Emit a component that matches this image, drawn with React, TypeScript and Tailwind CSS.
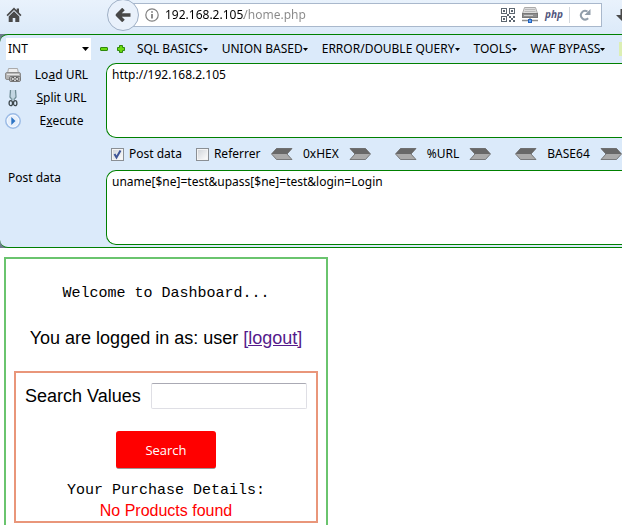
import React from "react";

const uiFont = "font-['Noto_Sans','Open_Sans',sans-serif]";

function HomeIcon() {
  return (
    <svg width="16" height="16" viewBox="0 0 16 16" fill="#4a4a4a" aria-hidden="true">
      <path d="M8 0.500 0.500 8l1.200 1.200L8 3l6.300 6.200L15.500 8 13 5.500V1.500h-2.300v1.800z" />
      <path d="M8 4.300 2.700 9.500V15h4v-4h2.600v4h4V9.500z" />
    </svg>
  );
}

function BackArrow() {
  return (
    <svg width="16" height="14" viewBox="0 0 16 14" fill="none" stroke="#484848" strokeWidth="3.600" aria-hidden="true">
      <path d="M8.500 1 2.500 7l6 6M3 7h12.500" strokeLinejoin="round" />
    </svg>
  );
}

function InfoIcon() {
  return (
    <svg className="shrink-0" width="14" height="14" viewBox="0 0 14 14" aria-hidden="true">
      <circle cx="7" cy="7" r="6.200" fill="none" stroke="#808080" strokeWidth="1.200" />
      <path d="M6.200 6h1.600v4.500H6.200zM6.200 3.300h1.600v1.500H6.200z" fill="#6e6e6e" />
    </svg>
  );
}

function QrIcon() {
  return (
    <svg width="14" height="14" viewBox="0 0 14 14" fill="#5c6670" aria-hidden="true">
      <path fillRule="evenodd" d="M0 0h6v6H0zM1 1v4h4V1zM8 0h6v6H8zM9 1v4h4V1zM0 8h6v6H0zM1 9v4h4V9z" />
      <path d="M2 2h2v2H2zM10 2h2v2h-2zM2 10h2v2H2zM8 8h2v2H8zM10 10h2v2h-2zM12 8h2v2h-2zM8 12h2v2H8zM12 12h2v2h-2zM6 6h2v2H6z" />
    </svg>
  );
}

function ServerIcon() {
  return (
    <svg width="16" height="16" viewBox="0 0 16 16" aria-hidden="true">
      <path d="M2.500.5h11l2 6h-15z" fill="#dcdcdc" stroke="#aaa" />
      <path d="M3 2.500h10M2.500 4.500h11" stroke="#b8b8b8" />
      <rect x=".5" y="6.500" width="15" height="4" fill="#8e8e8e" stroke="#777" />
      <path d="M2 8.500h9" stroke="#ccc" />
      <path d="M0 13.500h16M8 11v2" stroke="#909090" strokeWidth="1.500" />
      <rect x="6.500" y="12.500" width="3" height="3" fill="#6aa6f5" stroke="#2263bd" />
    </svg>
  );
}

function ReloadIcon() {
  return (
    <svg width="12" height="12" viewBox="0 0 12 12" aria-hidden="true">
      <path d="M9.200 9.300A4.300 4.300 0 1 1 8.500 2.500" fill="none" stroke="#929eaa" strokeWidth="2" />
      <path d="M11.500 0v6H5.500z" fill="#929eaa" />
    </svg>
  );
}

function DownloadIcon() {
  return (
    <svg width="14" height="16" viewBox="0 0 14 16" fill="#4a4a4a" aria-hidden="true">
      <path d="M4.500 1h5v6H14l-7 7-7-7h4.500z" />
    </svg>
  );
}

function PrinterIcon() {
  return (
    <svg width="16" height="16" viewBox="0 0 16 16" aria-hidden="true">
      <path d="M3.500 1.500h9l1 5h-11z" fill="#eee" stroke="#aaa" />
      <rect x=".5" y="5.500" width="15" height="7" rx="1.500" fill="#b5b5b5" stroke="#8b8b8b" />
      <path d="M2 7.500h12" stroke="#e5e5e5" />
      <rect x="4.500" y="9.500" width="11" height="5" rx="1.500" fill="#d2d2d2" stroke="#777" />
      <path d="M9 10.500H7.500a1.500 1.500 0 0 0 0 3H9M11 10.500h1.500a1.500 1.500 0 0 1 0 3H11M8.500 12h3" fill="none" stroke="#555" />
    </svg>
  );
}

function ScissorsIcon() {
  return (
    <svg width="10" height="18" viewBox="0 0 10 18" fill="none" aria-hidden="true">
      <path d="M2.500 1 2 8l2.500 3M7.500 1 8 8l-2.500 3" stroke="#6f8c95" strokeWidth="1.300" />
      <path d="M4 1v8l1 2 1-2V1" stroke="#a9c1c9" />
      <ellipse cx="2.800" cy="14.200" rx="1.700" ry="2.500" stroke="#3d474b" strokeWidth="1.300" />
      <ellipse cx="7.200" cy="14.200" rx="1.700" ry="2.500" stroke="#3d474b" strokeWidth="1.300" />
    </svg>
  );
}

function PlayIcon() {
  return (
    <svg width="16" height="16" viewBox="0 0 16 16" aria-hidden="true">
      <circle cx="8" cy="8" r="7.200" fill="#f7fbff" stroke="#9bbbe6" strokeWidth="1.500" />
      <circle cx="8" cy="8" r="5.500" fill="#e6effb" />
      <path d="M6.300 4v8l4.200-4z" fill="#2d74c4" />
    </svg>
  );
}

function ConvertArrow({ flip = false }: { flip?: boolean }) {
  return (
    <svg className={flip ? "-scale-x-100" : ""} width="22" height="12" viewBox="0 0 22 12" aria-hidden="true">
      <path d="M1 .5h15.500l5 5.500-5 5.500H1L6 6z" fill="#aaa" />
      <path d="M1 .5h15.500l5 5.500H6z" fill="#686868" />
      <path d="M1 .5h15.500l5 5.500-5 5.500H1L6 6z" fill="none" stroke="#666" strokeWidth=".8" />
    </svg>
  );
}

function Converter({ name }: { name: string }) {
  return (
    <div className="flex shrink-0 items-center gap-2.5">
      <button type="button" aria-label={`Decode ${name}`}>
        <ConvertArrow flip />
      </button>
      <span>{name}</span>
      <button type="button" aria-label={`Encode ${name}`}>
        <ConvertArrow />
      </button>
    </div>
  );
}

function Tick({ label, checked = false }: { label: string; checked?: boolean }) {
  return (
    <label className="flex shrink-0 items-center gap-[5px]">
      <span className="grid">
        <input
          type="checkbox"
          defaultChecked={checked}
          className="peer col-start-1 row-start-1 size-[13px] appearance-none border border-[#8a8f94] bg-linear-to-br from-[#cfd3d8] to-white shadow-[inset_0_0_0_1px_#f4f4f4]"
        />
        <svg className="pointer-events-none invisible col-start-1 row-start-1 peer-checked:visible" width="13" height="13" viewBox="0 0 13 13" aria-hidden="true">
          <path d="m3.500 6 2 3.500 4-7" fill="none" stroke="#3f5597" strokeWidth="2" />
        </svg>
      </span>
      {label}
    </label>
  );
}

function MenuButton({ name }: { name: string }) {
  return (
    <button type="button" className="flex shrink-0 items-center whitespace-nowrap">
      {name}
      <svg width="5" height="3" viewBox="0 0 5 3" aria-hidden="true">
        <path d="M0 0h5L2.500 3z" />
      </svg>
    </button>
  );
}

function ActionButton({ icon, children }: { icon: React.ReactNode; children: React.ReactNode }) {
  return (
    <button type="button" className="flex h-[23px] w-full items-center">
      <span className="flex w-4 justify-center">{icon}</span>
      <span className="flex-1 text-center">{children}</span>
    </button>
  );
}

function BrowserBar() {
  return (
    <header className="flex h-[34px] items-start overflow-hidden bg-linear-to-b from-[#e9f2fc] to-[#dceaf9]">
      <button type="button" aria-label="Home" className="ml-1.5 mt-[7px] shrink-0">
        <HomeIcon />
      </button>
      <button
        type="button"
        aria-label="Back"
        className="z-10 -mt-px ml-[85px] flex size-8 shrink-0 items-center justify-center rounded-full border border-[#9fb0c6] bg-[#e9f1fb]"
      >
        <BackArrow />
      </button>
      <div className="-ml-4 mt-[3px] flex h-6 min-w-0 flex-1 items-center border border-[#a9b8cc] bg-white pl-[21px] pr-2.5">
        <InfoIcon />
        <input
          aria-label="Address"
          defaultValue="192.168.2.105/home.php"
          className="ml-1.5 min-w-0 flex-1 bg-[linear-gradient(to_right,#000_79px,#888_79px)] bg-clip-text text-transparent outline-none"
        />
        <div className="flex items-center gap-[7px]">
          <QrIcon />
          <ServerIcon />
          <span className="w-[17px] text-[10px] font-bold italic text-[#52577e]">php</span>
          <span className="h-4 w-px bg-[#d3d8de]" />
          <button type="button" aria-label="Reload" className="ml-0.5">
            <ReloadIcon />
          </button>
        </div>
      </div>
      <button type="button" aria-label="Downloads" className="-mr-2 ml-3.5 mt-2 shrink-0">
        <DownloadIcon />
      </button>
    </header>
  );
}

function HackBar() {
  return (
    <section className="bg-[#6e7b8c]">
      <div className="overflow-hidden rounded-l-lg border-y border-[#008000] bg-[#dbeafa] pb-0.5">
        <div className="flex h-7 items-center whitespace-nowrap">
          <div className="ml-1.5 grid w-[85px] shrink-0 items-center">
            <select aria-label="Type" className="col-start-1 row-start-1 h-[22px] w-full appearance-none bg-white pl-0.5 outline-none">
              <option>INT</option>
            </select>
            <svg className="pointer-events-none col-start-1 row-start-1 mr-0.5 justify-self-end" width="7" height="4" viewBox="0 0 7 4" aria-hidden="true">
              <path d="M0 0h7L3.500 4z" />
            </svg>
          </div>
          <div className="ml-[9px] mr-3 flex shrink-0 items-center gap-[9px]">
            <button type="button" aria-label="Decrease">
              <svg width="8" height="8" viewBox="0 0 8 8" aria-hidden="true">
                <rect x=".5" y="2.500" width="7" height="3" rx=".5" fill="#6ad910" stroke="#2f8a0c" />
              </svg>
            </button>
            <button type="button" aria-label="Increase">
              <svg width="8" height="8" viewBox="0 0 8 8" aria-hidden="true">
                <path d="M2.500.5h3v2h2v3h-2v2h-3v-2h-2v-3h2z" fill="#6ad910" stroke="#2f8a0c" />
              </svg>
            </button>
          </div>
          <nav className="flex items-center gap-3.5">
            <MenuButton name="SQL BASICS" />
            <MenuButton name="UNION BASED" />
            <MenuButton name="ERROR/DOUBLE QUERY" />
            <MenuButton name="TOOLS" />
            <MenuButton name="WAF BYPASS" />
            <span className="h-3.5 w-4 shrink-0 bg-[#dcefb4]" />
          </nav>
        </div>
        <div className="flex">
          <div className="w-[106px] shrink-0 pl-[5px]">
            <div className="pr-1">
              <ActionButton icon={<PrinterIcon />}>Lo<u>a</u>d URL</ActionButton>
              <ActionButton icon={<ScissorsIcon />}><u>S</u>plit URL</ActionButton>
              <ActionButton icon={<PlayIcon />}>E<u>x</u>ecute</ActionButton>
            </div>
            <label htmlFor="post-body" className="ml-[3px] mt-[38px] block leading-4">Post data</label>
          </div>
          <div className="min-w-0 flex-1">
            <textarea
              aria-label="URL"
              defaultValue="http://192.168.2.105"
              className="block h-[75px] w-full resize-none rounded-l-[10px] border border-r-0 border-[#008000] bg-white px-[5px] py-[3px] leading-4 outline-none"
            />
            <div className="flex h-8 items-center overflow-hidden whitespace-nowrap pl-[5px]">
              <div className="flex w-40 shrink-0 items-center gap-3.5">
                <Tick label="Post data" checked />
                <Tick label="Referrer" />
              </div>
              <div className="flex items-center gap-6">
                <Converter name="0xHEX" />
                <Converter name="%URL" />
                <Converter name="BASE64" />
              </div>
            </div>
            <textarea
              id="post-body"
              defaultValue="uname[$ne]=test&upass[$ne]=test&login=Login"
              className="block h-[75px] w-full resize-none rounded-l-[10px] border border-r-0 border-[#008000] bg-white px-[5px] py-[3px] leading-4 outline-none"
            />
          </div>
        </div>
      </div>
    </section>
  );
}

function Dashboard() {
  return (
    <main className="ml-1 mt-[9px] w-[324px] flex-1 border-2 border-b-0 border-[#6ac46e] px-2 pb-0.5 text-center font-['Liberation_Sans',Arial,sans-serif] text-lg leading-5 text-black">
      <h1 className="mt-[25px] font-['Liberation_Mono',monospace] text-[15px]">Welcome to Dashboard...</h1>
      <p className="mt-6">
        You are logged in as: user <a href="#logout" className="text-[#551a8b] underline">[logout]</a>
      </p>
      <form className="mt-[23px] border-2 border-[#e9967a]" onSubmit={(e) => e.preventDefault()}>
        <div className="mt-2.5 flex items-center justify-between px-[9px]">
          <label htmlFor="search">Search Values</label>
          <input id="search" className="h-[26px] w-[156px] rounded-xs border border-[#dfdfe5] border-t-[#aaaab4] px-1 outline-none" />
        </div>
        <button type="submit" className="mt-[22px] h-[38px] w-[100px] rounded-[3px] border-b border-[#999] bg-[#ff0000] font-['Open_Sans','Noto_Sans',sans-serif] text-[13px] text-white">
          Search
        </button>
        <h2 className="mt-3 font-['Liberation_Mono',monospace] text-[15px]">Your Purchase Details:</h2>
        <p className="text-base leading-5 text-[#ff0000]">No Products found</p>
      </form>
    </main>
  );
}

export default function App() {
  return (
    <div className={`flex min-h-screen flex-col bg-white text-xs text-black ${uiFont}`}>
      <BrowserBar />
      <HackBar />
      <Dashboard />
    </div>
  );
}
